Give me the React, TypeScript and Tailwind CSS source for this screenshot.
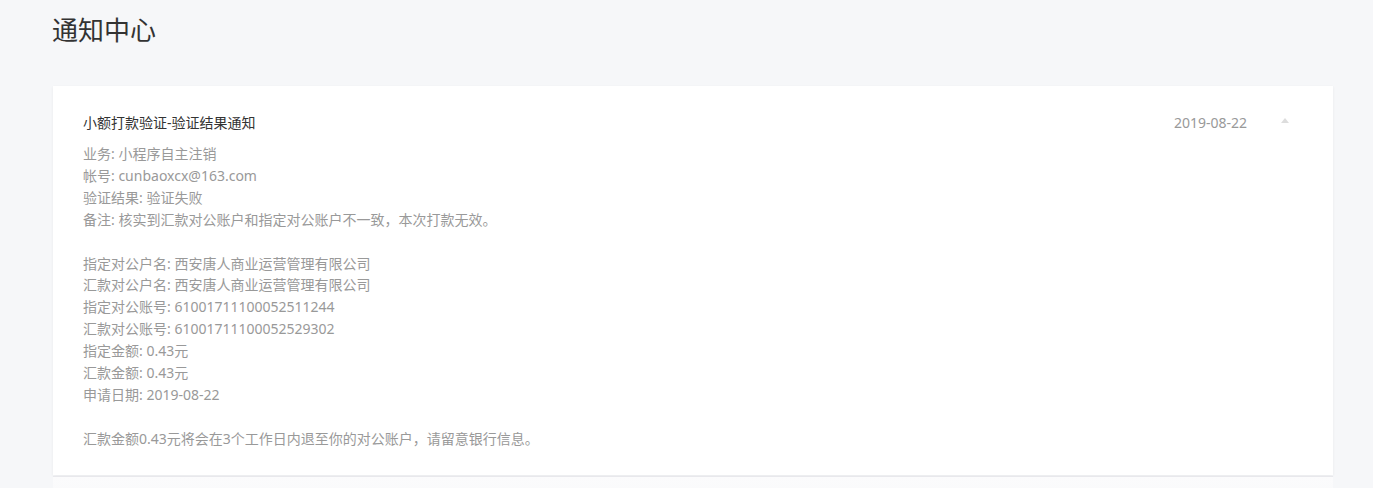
export default function App() {
  const lines1 = [
    "业务: 小程序自主注销",
    "帐号: cunbaoxcx@163.com",
    "验证结果: 验证失败",
    "备注: 核实到汇款对公账户和指定对公账户不一致，本次打款无效。",
  ]
  const lines2 = [
    "指定对公户名: 西安唐人商业运营管理有限公司",
    "汇款对公户名: 西安唐人商业运营管理有限公司",
    "指定对公账号: 61001711100052511244",
    "汇款对公账号: 61001711100052529302",
    "指定金额: 0.43元",
    "汇款金额: 0.43元",
    "申请日期: 2019-08-22",
  ]
  return (
    <div
      className="min-h-screen bg-[#f6f7f9] pl-[52px] pr-[40px] pt-[13px]"
      style={{ fontFamily: '"Noto Sans", "Noto Sans CJK SC", sans-serif' }}
    >
      <h1 className="text-[26px] leading-[34px] text-[#333] font-normal">通知中心</h1>
      <div className="mt-[39px] ml-px">
        <div className="bg-white shadow-[0_1px_3px_rgba(0,0,0,0.06)] px-[30px] pt-[26px] pb-[25px]">
          <div className="flex items-center">
            <div className="flex-1 text-[14px] leading-[22px] text-[#333]">
              小额打款验证-验证结果通知
            </div>
            <div className="text-[14px] leading-[22px] text-[#999]">2019-08-22</div>
            <div className="w-[56px] flex justify-end pr-[14px]">
              <svg width="8" height="5" viewBox="0 0 8 5" className="-mt-[5px]">
                <path d="M4 0 L8 5 L0 5 Z" fill="#ddd" />
              </svg>
            </div>
          </div>
          <div className="mt-[9px] text-[14px] leading-[21.9px] text-[#999]">
            {lines1.map((l) => (
              <div key={l}>{l}</div>
            ))}
            <div className="h-[21.9px]" />
            {lines2.map((l) => (
              <div key={l}>{l}</div>
            ))}
            <div className="h-[21.9px]" />
            <div>汇款金额0.43元将会在3个工作日内退至你的对公账户，请留意银行信息。</div>
          </div>
        </div>
        <div className="mt-px h-[60px] bg-gradient-to-b from-[#fbfbfc] to-[#f6f7f9] border-t border-[#e8e8ec]" />
      </div>
    </div>
  )
}
